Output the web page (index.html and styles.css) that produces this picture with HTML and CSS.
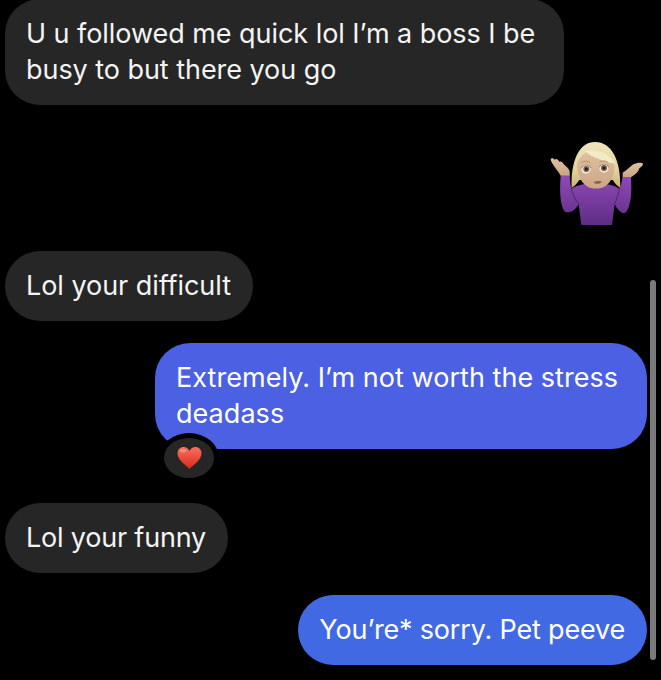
FILE: index.html
```html
<!DOCTYPE html>
<html lang="en">
<head>
<meta charset="utf-8">
<title>Messages</title>
<link rel="stylesheet" href="styles.css">
</head>
<body>
<main class="thread">
  <div class="row row-in row-first"><p class="bubble bubble-in bubble-wide">U u followed me quick lol I’m a boss I be busy to but there you go</p></div>
  <div class="row row-out row-emoji">
    <svg class="shrug" viewBox="0 0 393 330" aria-label="woman shrugging emoji">
      <defs>
        <linearGradient id="hair" x1="0" y1="0" x2="0" y2="1"><stop offset="0" stop-color="#efe6bd"/><stop offset="0.6" stop-color="#e3d39a"/><stop offset="1" stop-color="#c9b377"/></linearGradient>
        <linearGradient id="shirt" x1="0" y1="0" x2="0" y2="1"><stop offset="0" stop-color="#8f4bb6"/><stop offset="1" stop-color="#5e2c85"/></linearGradient>
        <linearGradient id="skin" x1="0" y1="0" x2="0" y2="1"><stop offset="0" stop-color="#dfc0a0"/><stop offset="1" stop-color="#cba685"/></linearGradient>
      </defs>
      <path d="M125 174C122 90 148 36 195 36C246 36 273 92 271 174C262 168 254 160 248 150L148 150C142 160 134 168 125 174Z" fill="url(#hair)"/>
      <path d="M92 138L119 136C120 150 121 162 124 176C140 166 165 160 196 160C228 160 252 166 268 176C274 165 276 155 277 141L303 141C306 190 303 226 288 247C278 255 262 240 254 222L246 285L154 285L146 222C138 240 118 252 105 245C91 230 88 190 92 138Z" fill="url(#shirt)"/>
      <path class="fold" d="M124 176C128 195 136 210 146 222"/>
      <path class="fold" d="M268 176C264 195 260 210 254 222"/>
      <path d="M92 137C84 122 68 106 62 90C62 83 70 83 75 90C75 84 85 86 88 96C92 93 98 96 101 103C106 108 115 113 119 124L119 137Z" fill="url(#skin)"/>
      <path d="M278 128C290 122 298 112 310 103C320 99 335 96 339 102C339 108 331 112 327 116C326 125 316 133 304 141L278 141Z" fill="url(#skin)"/>
      <path d="M142 96C150 84 160 72 170 66C190 84 222 92 252 100C256 126 246 160 220 172C206 178 182 177 170 168C150 155 137 122 142 96Z" fill="url(#skin)"/>
      <path d="M165 63C185 60 235 60 256 102C226 94 190 86 165 63Z" fill="#f3ebc8"/>
      <circle class="eye-white" cx="168" cy="117" r="14"/>
      <circle class="eye-white" cx="222" cy="114" r="14"/>
      <circle class="iris" cx="169" cy="117" r="9"/>
      <circle class="iris" cx="222" cy="114" r="9"/>
      <circle class="pupil" cx="169" cy="117" r="4.5"/>
      <circle class="pupil" cx="222" cy="114" r="4.5"/>
      <path class="lash" d="M154 114C159 102 177 101 182 113"/>
      <path class="lash" d="M208 111C213 99 231 99 236 111"/>
      <path class="brow" d="M155 97C163 92 172 93 179 97"/>
      <path class="brow" d="M209 96C216 91 226 92 233 97"/>
      <path class="mouth" d="M190 158C197 153 208 152 216 155C210 162 198 163 190 158Z"/>
    </svg>
  </div>
  <div class="row row-in row-diff"><p class="bubble bubble-in">Lol your difficult</p></div>
  <div class="row row-out row-extreme">
    <div class="reacted">
      <p class="bubble bubble-out-a">Extremely. I’m not worth the stress deadass</p>
      <span class="reaction">
        <svg class="heart" viewBox="0 0 24 22" aria-label="heart reaction">
          <defs>
            <linearGradient id="red" x1="0" y1="0" x2="0" y2="1"><stop offset="0" stop-color="#f9705f"/><stop offset="1" stop-color="#d82a1a"/></linearGradient>
          </defs>
          <path d="M12 21.5C7 17 0.5 12.5 0.5 6.5C0.5 2.8 3.2 0.5 6.3 0.5C8.7 0.5 10.8 1.8 12 4.2C13.2 1.8 15.3 0.5 17.7 0.5C20.8 0.5 23.5 2.8 23.5 6.5C23.5 12.5 17 17 12 21.5Z" fill="url(#red)"/>
          <ellipse class="heart-shine" cx="6" cy="4" rx="3" ry="1.6"/>
        </svg>
      </span>
    </div>
  </div>
  <div class="row row-in row-funny"><p class="bubble bubble-in bubble-tight">Lol your funny</p></div>
  <div class="row row-out row-last"><p class="bubble bubble-out-b">You’re* sorry. Pet peeve</p></div>
  <div class="scrollbar"></div>
</main>
</body>
</html>
```
FILE: styles.css
```css
* { box-sizing: border-box; }
html, body { margin: 0; height: 100%; background: #000; overflow: hidden; }
.thread {
  position: relative;
  height: 680px;
  display: flex;
  flex-direction: column;
  font-family: Inter, "Liberation Sans", sans-serif;
  color: #fff;
}
.row { display: flex; }
.row-in { justify-content: flex-start; padding-left: 5px; }
.row-out { justify-content: flex-end; padding-right: 14px; }
.row-first { margin-top: -1px; }
.row-emoji { padding-right: 0; margin-top: 25px; }
.row-diff { margin-top: 11px; }
.row-extreme { margin-top: 22px; }
.row-funny { margin-top: 54px; }
.row-last { margin-top: 22px; }

.bubble {
  margin: 0;
  padding: 17px 22px 17px 21px;
  font-size: 27px;
  line-height: 36px;
  letter-spacing: -0.05px;
  border-radius: 35px;
}
.bubble-in { background: #262626; color: #f4f4f4; }
.bubble-wide { width: 559px; }
.bubble-tight { letter-spacing: -0.2px; }
.bubble-out-a { background: #4b60e2; width: 492px; letter-spacing: 0.04px; }
.bubble-out-b { background: #4169e3; letter-spacing: -0.18px; }

.shrug { display: block; width: 131px; height: 110px; }
.eye-white { fill: #efe8e0; }
.iris { fill: #7a5c46; }
.pupil { fill: #2a1c14; }
.lash { fill: none; stroke: #6b4f3c; stroke-width: 2; stroke-linecap: round; }
.brow { fill: none; stroke: #b4946a; stroke-width: 3; stroke-linecap: round; }
.mouth { fill: #8c5a4a; }
.fold { fill: none; stroke: #52266f; stroke-width: 3; stroke-linecap: round; }

.reacted { position: relative; }
.reaction {
  position: absolute;
  left: 4px;
  top: 90px;
  width: 60px;
  height: 50px;
  display: flex;
  align-items: center;
  justify-content: center;
  background: #262626;
  border: 5px solid #000;
  border-radius: 50%;
}
.heart { display: block; width: 25px; height: 24px; }
.heart-shine { fill: #ffb0a4; opacity: 0.6; }

.scrollbar {
  position: absolute;
  left: 650px;
  top: 280px;
  width: 6px;
  height: 380px;
  background: #7b7b7b;
  border-radius: 3px;
}
```
